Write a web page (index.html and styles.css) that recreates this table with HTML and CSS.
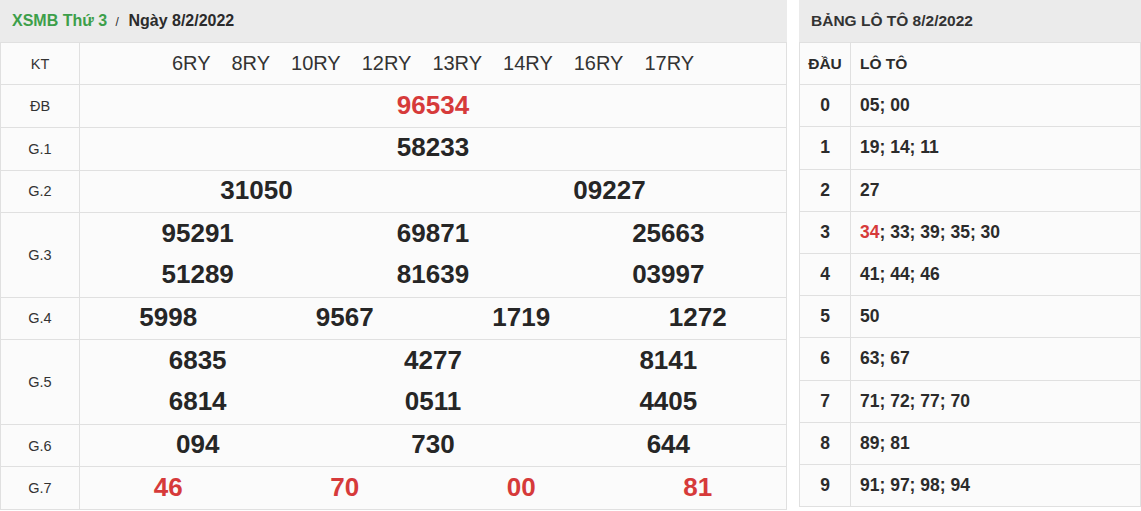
FILE: index.html
```html
<!DOCTYPE html>
<html>
<head>
    <title>XSMB 8/2/2022</title>
    <link rel="stylesheet" href="styles.css">
</head>
<body>
    <div class="page">
        <!-- Ket qua -->
        <div class="result">
            <div class="title">
                <span class="green">XSMB Thứ 3</span>
                <span class="slash">/</span>
                <span>Ngày 8/2/2022</span>
            </div>
            <table class="kq">
                <tr>
                    <td class="lbl">KT</td>
                    <td>
                        <div class="codes">
                            <span>6RY</span><span>8RY</span><span>10RY</span><span>12RY</span>
                            <span>13RY</span><span>14RY</span><span>16RY</span><span>17RY</span>
                        </div>
                    </td>
                </tr>
                <tr>
                    <td class="lbl">ĐB</td>
                    <td><div class="nums red"><span>96534</span></div></td>
                </tr>
                <tr>
                    <td class="lbl">G.1</td>
                    <td><div class="nums"><span>58233</span></div></td>
                </tr>
                <tr>
                    <td class="lbl">G.2</td>
                    <td><div class="nums"><span>31050</span><span>09227</span></div></td>
                </tr>
                <tr class="double">
                    <td class="lbl">G.3</td>
                    <td>
                        <div class="nums"><span>95291</span><span>69871</span><span>25663</span></div>
                        <div class="nums"><span>51289</span><span>81639</span><span>03997</span></div>
                    </td>
                </tr>
                <tr>
                    <td class="lbl">G.4</td>
                    <td><div class="nums"><span>5998</span><span>9567</span><span>1719</span><span>1272</span></div></td>
                </tr>
                <tr class="double">
                    <td class="lbl">G.5</td>
                    <td>
                        <div class="nums"><span>6835</span><span>4277</span><span>8141</span></div>
                        <div class="nums"><span>6814</span><span>0511</span><span>4405</span></div>
                    </td>
                </tr>
                <tr>
                    <td class="lbl">G.6</td>
                    <td><div class="nums"><span>094</span><span>730</span><span>644</span></div></td>
                </tr>
                <tr>
                    <td class="lbl">G.7</td>
                    <td><div class="nums red"><span>46</span><span>70</span><span>00</span><span>81</span></div></td>
                </tr>
            </table>
        </div>

        <!-- Bang lo to -->
        <div class="loto">
            <div class="title">BẢNG LÔ TÔ 8/2/2022</div>
            <table class="lt">
                <tr class="head">
                    <td class="dau">ĐẦU</td>
                    <td>LÔ TÔ</td>
                </tr>
                <tr><td class="dau">0</td><td>05; 00</td></tr>
                <tr><td class="dau">1</td><td>19; 14; 11</td></tr>
                <tr><td class="dau">2</td><td>27</td></tr>
                <tr><td class="dau">3</td><td><span class="red">34</span>; 33; 39; 35; 30</td></tr>
                <tr><td class="dau">4</td><td>41; 44; 46</td></tr>
                <tr><td class="dau">5</td><td>50</td></tr>
                <tr><td class="dau">6</td><td>63; 67</td></tr>
                <tr><td class="dau">7</td><td>71; 72; 77; 70</td></tr>
                <tr><td class="dau">8</td><td>89; 81</td></tr>
                <tr><td class="dau">9</td><td>91; 97; 98; 94</td></tr>
            </table>
        </div>
    </div>
</body>
</html>
```

FILE: styles.css
```css
body {
    margin: 0;
    padding: 0;
    background: #fff;
    color: #222;
    font-family: "Liberation Sans", Arial, sans-serif;
}
.page {
    display: flex;
    gap: 12px;
    width: 1141px;
}
.result {
    width: 787px;
}
.loto {
    width: 342px;
}
.title {
    height: 42px;
    line-height: 42px;
    background: #ebebeb;
    padding-left: 12px;
    font-size: 16px;
    font-weight: bold;
    color: #2b2b2b;
}
.loto .title {
    font-size: 15.5px;
    color: #333;
}
.green {
    color: #3d9f4a;
}
.slash {
    font-size: 12px;
    font-weight: normal;
    margin: 0 5px 0 4px;
}
table {
    width: 100%;
    border-collapse: collapse;
    background: #fbfbfb;
}
td {
    border: 1px solid #e0e0e0;
    padding: 0;
    height: 41.2px;
}
.double td {
    height: 83.4px;
}
.kq .lbl {
    width: 78px;
    text-align: center;
    font-size: 14.5px;
    color: #333;
}
.codes {
    display: flex;
    justify-content: center;
    gap: 21px;
    font-size: 20px;
    color: #333;
}
.nums {
    display: flex;
    height: 41.7px;
    align-items: center;
    padding-bottom: 2px;
    box-sizing: border-box;
    font-size: 26px;
    font-weight: bold;
    color: #262626;
}
.nums span {
    flex: 1;
    text-align: center;
}
.red, .nums.red {
    color: #d63a3a;
}
.lt td {
    font-size: 17.5px;
    font-weight: bold;
    color: #2b2b2b;
    padding-left: 9px;
}
.lt .dau {
    width: 50px;
    padding: 0;
    text-align: center;
}
.lt .head td {
    font-size: 15.5px;
}
```
